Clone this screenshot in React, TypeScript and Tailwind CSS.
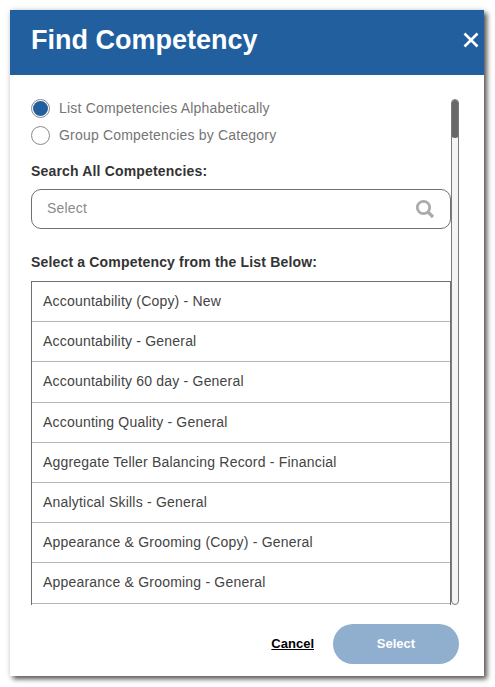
import React from "react";

const items = [
  "Accountability (Copy) - New",
  "Accountability - General",
  "Accountability 60 day - General",
  "Accounting Quality - General",
  "Aggregate Teller Balancing Record - Financial",
  "Analytical Skills - General",
  "Appearance & Grooming (Copy) - General",
  "Appearance & Grooming - General",
];

function Radio({ checked, label }: { checked?: boolean; label: string }) {
  return (
    <div className="flex items-center h-[27px]">
      <span className="w-[19px] h-[19px] rounded-full border border-[#8a8a8a] bg-white flex items-center justify-center shrink-0">
        {checked && <span className="w-[15px] h-[15px] rounded-full bg-[#215f9f]" />}
      </span>
      <span className="ml-[9px] text-[14px] tracking-[0.19px] text-[#757575]">{label}</span>
    </div>
  );
}

export default function App() {
  return (
    <div className="w-[495px] h-[687px] bg-white pt-[10px] pl-[10px] font-['Liberation_Sans',Arial,sans-serif]">
      <div className="w-[474px] h-[666px] bg-white flex flex-col shadow-[3px_3px_5px_rgba(0,0,0,0.65),0_0_6px_rgba(0,0,0,0.12)]">
        <header className="h-[65px] bg-[#215f9f] flex items-center justify-between pl-[21px] pr-[5px] shrink-0">
          <h1 className="text-[27px] font-bold text-white leading-none -mt-[4px]">Find Competency</h1>
          <svg width="16" height="16" viewBox="0 0 16 16" className="-mt-[5px]" aria-label="Close">
            <path d="M1.5 1.5 14.5 14.5M14.5 1.5 1.5 14.5" stroke="#fff" strokeWidth="2.6" fill="none" />
          </svg>
        </header>

        <div className="flex pl-[21px] pt-[24px] h-[530px] shrink-0">
          <main className="w-[420px] flex flex-col min-h-0">
            <div className="-mt-[4px]">
              <Radio checked label="List Competencies Alphabetically" />
              <Radio label="Group Competencies by Category" />
            </div>
            <label className="mt-[14px] text-[14px] leading-[16px] font-bold text-[#333] tracking-[0.17px]">
              Search All Competencies:
            </label>
            <div className="mt-[10px] h-[40px] rounded-[10px] border border-[#6f6f6f] flex items-center justify-between pl-[15px] pr-[15px] shrink-0">
              <span className="text-[14px] tracking-[0.2px] text-[#8a8a8a] -mt-[2px]">Select</span>
              <svg width="20" height="20" viewBox="0 0 20 20" aria-hidden="true">
                <circle cx="8.5" cy="8.5" r="6.2" fill="none" stroke="#ababab" strokeWidth="2.8" />
                <path d="M13 13 18 18" stroke="#ababab" strokeWidth="3.2" />
              </svg>
            </div>
            <label className="mt-[25px] text-[14px] leading-[16px] font-bold text-[#333] tracking-[0.17px]">
              Select a Competency from the List Below:
            </label>
            <div className="mt-[11px] flex-1 min-h-0 overflow-hidden border-l border-r border-t border-[#6f6f6f]">
              <ul>
                {items.map((t) => (
                  <li
                    key={t}
                    className="h-[40.2px] border-b border-[#b4b4b4] pl-[11px] flex items-center text-[14px] tracking-[0.2px] text-[#444444]"
                  >
                    {t}
                  </li>
                ))}
              </ul>
            </div>
          </main>
          <div className="w-[8px] rounded-[4px] border border-[#7a7a7a] bg-[#f4f4f4] overflow-hidden relative">
            <div className="absolute -left-px -top-px w-[8px] h-[39px] rounded-[4px] bg-[#686868]" />
          </div>
        </div>

        <footer className="flex-1 flex items-center justify-end pr-[25px] pt-[7px]">
          <a className="text-[13px] font-bold text-black underline mr-[19px]">Cancel</a>
          <button className="w-[126px] h-[40px] rounded-[20px] bg-[#90aece] text-white text-[13px] font-bold">
            Select
          </button>
        </footer>
      </div>
    </div>
  );
}
